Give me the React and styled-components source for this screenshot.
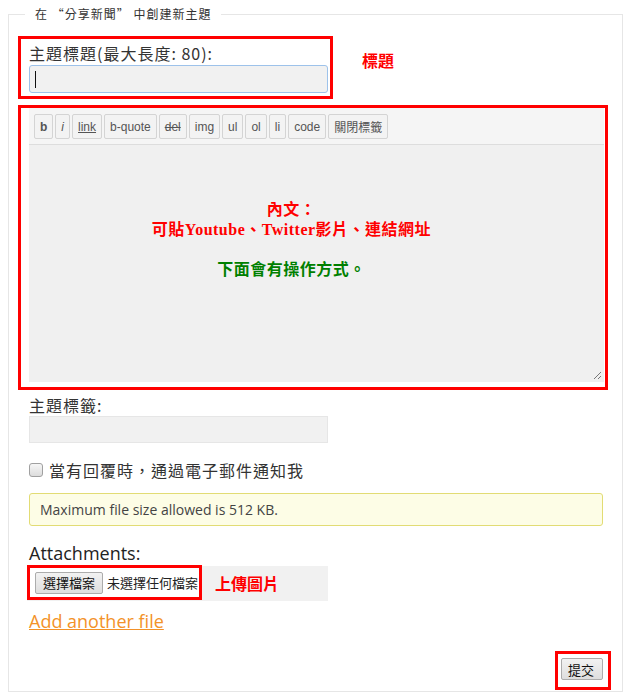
import styled, { createGlobalStyle, css } from 'styled-components';

const RED = '#ff0000';
const CJK = '"Noto Sans CJK TC", "Liberation Sans", sans-serif';

const GlobalStyle = createGlobalStyle`
  body {
    margin: 0;
    background: #ffffff;
    font-family: ${CJK};
    color: #333333;
  }
`;

const Fieldset = styled.fieldset`
  margin: 5px 0 0 8px;
  width: 615px;
  box-sizing: border-box;
  border: 1px solid #e6e6e6;
  padding: 0 11px 1px 9px;
  min-width: 0;
`;

const Legend = styled.legend`
  margin-left: 7px;
  padding: 0 10px;
  font-size: 12px;
  line-height: 18px;
  letter-spacing: 1px;
  color: #333333;
`;

const AnnotatedRow = styled.div`
  display: flex;
  align-items: flex-start;
  margin-top: ${(p) => p.$top || 0}px;
`;

const RedBox = styled.div`
  border: 3px solid ${RED};
  box-sizing: border-box;
  ${(p) => p.$width && css`width: ${p.$width}px;`}
  ${(p) => p.$height && css`height: ${p.$height}px;`}
`;

const TitleBox = styled(RedBox)`
  padding: 4px 0 0 8px;
`;

const Note = styled.span`
  font-family: ${CJK};
  font-weight: 700;
  font-size: 16px;
  line-height: 20px;
  color: ${RED};
  margin-left: ${(p) => p.$left || 0}px;
  margin-top: ${(p) => p.$top || 0}px;
`;

const Label = styled.div`
  font-size: 16px;
  line-height: 20px;
  letter-spacing: 1px;
  color: #333333;
  margin-top: ${(p) => p.$top || 0}px;
`;

const TextBox = styled.div`
  width: 299px;
  height: ${(p) => (p.$focused ? 28 : 27)}px;
  box-sizing: border-box;
  margin-top: ${(p) => p.$top || 0}px;
  background: #f1f1f1;
  border: 1px solid ${(p) => (p.$focused ? '#9dc2ea' : '#e6e6e6')};
  border-radius: ${(p) => (p.$focused ? 3 : 0)}px;
  display: flex;
  align-items: center;
  padding-left: 5px;
`;

const Caret = styled.span`
  width: 1px;
  height: 17px;
  background: #111111;
`;

const EditorBox = styled(RedBox)`
  width: 590px;
  height: 285px;
  padding: 0 1px 5px 8px;
`;

const Editor = styled.div`
  height: 100%;
  display: flex;
  flex-direction: column;
`;

const Toolbar = styled.div`
  display: flex;
  gap: 2px;
  padding: 6px 5px 5px;
  background: #f5f5f5;
  border-bottom: 1px solid #dddddd;
`;

const ToolButton = styled.span`
  height: 25px;
  box-sizing: border-box;
  padding: 0 5px;
  display: flex;
  align-items: center;
  border: 1px solid #d4d4d4;
  border-radius: 2px;
  background: #f3f3f3;
  font-family: "Liberation Sans", ${CJK};
  font-size: 12px;
  color: #555555;
  font-weight: ${(p) => (p.$bold ? 700 : 400)};
  font-style: ${(p) => (p.$italic ? 'italic' : 'normal')};
  text-decoration: ${(p) => p.$deco || 'none'};
`;

const TextArea = styled.div`
  flex: 1;
  position: relative;
  background: #f0f0f0;
  padding: 55px 50px 0 0;
  text-align: center;
  font-family: "Liberation Serif", ${CJK};
  font-weight: 700;
  font-size: 16px;
  line-height: 20px;
  letter-spacing: 0.5px;
`;

const Line = styled.div`
  color: ${(p) => p.$color};
  min-height: 20px;
`;

const Grip = styled.svg`
  position: absolute;
  right: 2px;
  bottom: 2px;
`;

const Field = styled.div`
  padding-left: 11px;
`;

const CheckRow = styled.div`
  display: flex;
  align-items: center;
  gap: 6px;
  margin-top: 17px;
  height: 20px;
`;

const CheckBox = styled.span`
  width: 12px;
  height: 12px;
  border: 1px solid #a0a0a0;
  border-radius: 3px;
  background: linear-gradient(#f6f6f6, #dcdcdc);
`;

const CheckText = styled.span`
  font-size: 16px;
  letter-spacing: 1px;
  color: #333333;
`;

const Notice = styled.div`
  margin-top: 13px;
  width: 574px;
  height: 33px;
  box-sizing: border-box;
  border: 1px solid #e2dc74;
  border-radius: 3px;
  background: #fdfde6;
  padding: 0 10px;
  display: flex;
  align-items: center;
  font-family: "Open Sans", "Liberation Sans", sans-serif;
  font-size: 14px;
  color: #444444;
`;

const Attach = styled.div`
  margin-top: 16px;
  font-family: "Open Sans", "Liberation Sans", sans-serif;
  font-size: 18px;
  line-height: 22px;
  color: #222222;
`;

const FileRow = styled.div`
  margin: 2px 0 0 -2px;
  width: 301px;
  height: 35px;
  background: #f1f1f1;
  display: flex;
  align-items: flex-start;
`;

const FileBox = styled(RedBox)`
  height: 35px;
  display: flex;
  align-items: center;
  gap: 4px;
  padding: 0 1px 0 5px;
  margin-top: -1px;
  background: #ffffff;
`;

const NativeButton = styled.span`
  height: 22px;
  box-sizing: border-box;
  padding: 0 ${(p) => p.$pad || 8}px;
  display: flex;
  align-items: center;
  border: 1px solid #acacac;
  border-radius: 2px;
  background: linear-gradient(#f2f2f2, #dedede);
  font-family: ${CJK};
  font-size: 13px;
  color: #111111;
`;

const FileText = styled.span`
  font-size: 13px;
  color: #222222;
`;

const AddLink = styled.a`
  display: block;
  margin-top: 8px;
  width: fit-content;
  font-family: "Open Sans", "Liberation Sans", sans-serif;
  font-size: 18px;
  line-height: 24px;
  color: #f39229;
  text-decoration: underline;
`;

const SubmitRow = styled.div`
  display: flex;
  justify-content: flex-end;
  margin-top: 18px;
`;

const SubmitBox = styled(RedBox)`
  padding: 4px 5px 0 3px;
`;

const tools = [
  { t: 'b', bold: true },
  { t: 'i', italic: true },
  { t: 'link', deco: 'underline' },
  { t: 'b-quote' },
  { t: 'del', deco: 'line-through' },
  { t: 'img' },
  { t: 'ul' },
  { t: 'ol' },
  { t: 'li' },
  { t: 'code' },
  { t: '關閉標籤' },
];

const App = () => {
  return (
    <>
      <GlobalStyle />
      <Fieldset>
        <Legend>在 “分享新聞” 中創建新主題</Legend>

        <AnnotatedRow $top={13}>
          <TitleBox $width={315} $height={63}>
            <Label>主題標題(最大長度: 80):</Label>
            <TextBox $focused $top={2}>
              <Caret />
            </TextBox>
          </TitleBox>
          <Note $left={29} $top={14}>標題</Note>
        </AnnotatedRow>

        <AnnotatedRow $top={6}>
          <EditorBox>
            <Editor>
              <Toolbar>
                {tools.map((tool) => (
                  <ToolButton
                    key={tool.t}
                    $bold={tool.bold}
                    $italic={tool.italic}
                    $deco={tool.deco}
                  >
                    {tool.t}
                  </ToolButton>
                ))}
              </Toolbar>
              <TextArea>
                <Line $color={RED}>內文：</Line>
                <Line $color={RED}>可貼Youtube、Twitter影片、連結網址</Line>
                <Line />
                <Line $color="#008000">下面會有操作方式。</Line>
                <Grip width="9" height="9" viewBox="0 0 9 9">
                  <path d="M1 8 L8 1 M5 8 L8 5" stroke="#777" strokeWidth="1" />
                </Grip>
              </TextArea>
            </Editor>
          </EditorBox>
        </AnnotatedRow>

        <Field>
          <Label $top={5}>主題標籤:</Label>
          <TextBox $top={1} />

          <CheckRow>
            <CheckBox />
            <CheckText>當有回覆時，通過電子郵件通知我</CheckText>
          </CheckRow>

          <Notice>Maximum file size allowed is 512 KB.</Notice>

          <Attach>Attachments:</Attach>
          <AnnotatedRow>
            <FileRow>
              <FileBox>
                <NativeButton $pad={7}>選擇檔案</NativeButton>
                <FileText>未選擇任何檔案</FileText>
              </FileBox>
              <Note $left={13} $top={7}>上傳圖片</Note>
            </FileRow>
          </AnnotatedRow>

          <AddLink href="#">Add another file</AddLink>
        </Field>

        <SubmitRow>
          <SubmitBox $width={56} $height={39}>
            <NativeButton $pad={6}>提交</NativeButton>
          </SubmitBox>
        </SubmitRow>
      </Fieldset>
    </>
  );
};

export default App;
